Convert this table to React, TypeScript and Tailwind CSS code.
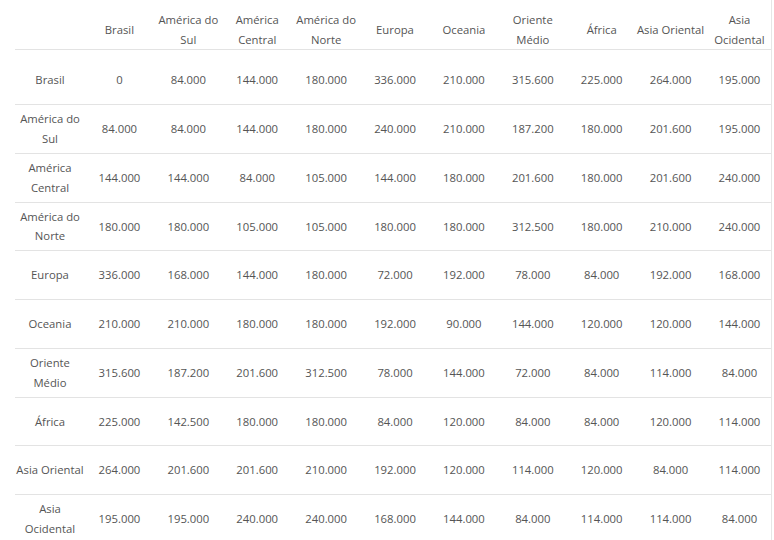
import React from 'react';

const regions: string[][] = [
  ['Brasil'],
  ['América do', 'Sul'],
  ['América', 'Central'],
  ['América do', 'Norte'],
  ['Europa'],
  ['Oceania'],
  ['Oriente', 'Médio'],
  ['África'],
  ['Asia Oriental'],
  ['Asia', 'Ocidental'],
];

const values: string[][] = [
  ['0', '84.000', '144.000', '180.000', '336.000', '210.000', '315.600', '225.000', '264.000', '195.000'],
  ['84.000', '84.000', '144.000', '180.000', '240.000', '210.000', '187.200', '180.000', '201.600', '195.000'],
  ['144.000', '144.000', '84.000', '105.000', '144.000', '180.000', '201.600', '180.000', '201.600', '240.000'],
  ['180.000', '180.000', '105.000', '105.000', '180.000', '180.000', '312.500', '180.000', '210.000', '240.000'],
  ['336.000', '168.000', '144.000', '180.000', '72.000', '192.000', '78.000', '84.000', '192.000', '168.000'],
  ['210.000', '210.000', '180.000', '180.000', '192.000', '90.000', '144.000', '120.000', '120.000', '144.000'],
  ['315.600', '187.200', '201.600', '312.500', '78.000', '144.000', '72.000', '84.000', '114.000', '84.000'],
  ['225.000', '142.500', '180.000', '180.000', '84.000', '120.000', '84.000', '84.000', '120.000', '114.000'],
  ['264.000', '201.600', '201.600', '210.000', '192.000', '120.000', '114.000', '120.000', '84.000', '114.000'],
  ['195.000', '195.000', '240.000', '240.000', '168.000', '144.000', '84.000', '114.000', '114.000', '84.000'],
];

const Label: React.FC<{ lines: string[] }> = ({ lines }) => (
  <div className="text-center">
    {lines.map((l, i) => (
      <div key={i} className="whitespace-nowrap">{l}</div>
    ))}
  </div>
);

// label column is a touch wider than the value columns
const cols = 'grid grid-cols-[70px_repeat(10,68.9px)]';

export default function App() {
  return (
    <div
      className="w-[774px] h-[540px] overflow-hidden bg-white text-[#555] text-[11.3px] leading-[19.5px]"
      style={{ fontFamily: '"Open Sans", "Noto Sans", sans-serif' }}
    >
      <div className="ml-[15px] w-[757px] min-h-[560px] border-r border-[#e6e6e6]">
        {/* header */}
        <div className={`${cols} h-[50px] pt-[10px] border-b border-[#e3e3e3] items-center`}>
          <div />
          {regions.map((r, i) => (
            <Label key={i} lines={r} />
          ))}
        </div>

        {regions.map((r, ri) => (
          <div
            key={ri}
            className={`${cols} items-center border-b border-[#e3e3e3] ${
              ri === 0 ? 'h-[55px] pt-[6px]' : 'h-[48.75px]'
            }`}
          >
            <Label lines={r} />
            {values[ri].map((v, ci) => (
              <div key={ci} className="text-center">{v}</div>
            ))}
          </div>
        ))}
      </div>
    </div>
  );
}
